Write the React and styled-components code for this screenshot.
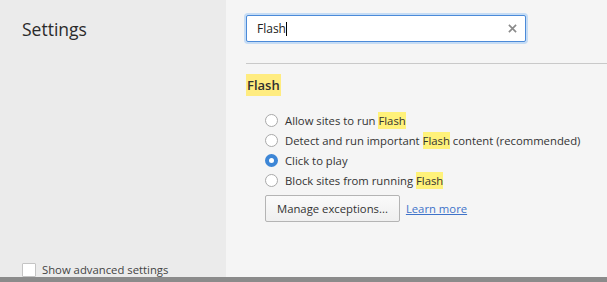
import React from "react";
import styled, { createGlobalStyle } from "styled-components";

const GlobalStyle = createGlobalStyle`
  html, body {
    margin: 0;
    padding: 0;
    background: #f5f5f5;
  }
  body {
    font-family: "Open Sans", "Noto Sans", sans-serif;
    color: #303030;
  }
`;

const Page = styled.div`
  display: flex;
  flex-direction: column;
  height: 282px;
  width: 607px;
  overflow: hidden;
`;

const Main = styled.div`
  flex: 1;
  display: flex;
  min-height: 0;
`;

const Sidebar = styled.aside`
  width: 226px;
  flex-shrink: 0;
  background: #ebebeb;
  display: flex;
  flex-direction: column;
  justify-content: space-between;
  padding: 17px 0 0 22px;
  box-sizing: border-box;
`;

const Title = styled.h1`
  margin: 0;
  font-size: 17.5px;
  font-weight: 400;
  color: #2a2a2a;
`;

const AdvancedRow = styled.label`
  display: flex;
  align-items: center;
  gap: 6px;
  font-size: 11.3px;
  color: #444;
`;

const Checkbox = styled.span`
  width: 12px;
  height: 12px;
  border: 1px solid #c4c4c4;
  border-radius: 1px;
  background: #fff;
`;

const Content = styled.section`
  flex: 1;
  background: #f5f5f5;
  padding: 15px 0 0 20px;
`;

const SearchBox = styled.div`
  width: 280px;
  height: 27px;
  box-sizing: border-box;
  border: 1px solid #4b8ad8;
  border-radius: 2px;
  box-shadow: 0 0 0 2px #c5dcf5;
  background: #fff;
  display: flex;
  align-items: center;
  padding: 0 8px 0 10px;
`;

const SearchText = styled.span`
  flex: 1;
  font-size: 12px;
  color: #222;
  display: flex;
  align-items: center;
`;

const Caret = styled.span`
  width: 1px;
  height: 14px;
  background: #000;
`;

const ClearIcon = styled.svg`
  width: 9px;
  height: 9px;
`;

const Divider = styled.hr`
  margin: 21px 0 0 0;
  border: 0;
  border-top: 1px solid #c9c9c9;
`;

const Heading = styled.h2`
  margin: 12px 0 0 0;
  font-size: 13px;
  font-weight: 600;
  color: #303030;
  line-height: 19px;
`;

const Mark = styled.mark`
  background: ${({ strong }) => (strong ? "#ffec80" : "#fff27a")};
  color: inherit;
  padding: ${({ strong }) => (strong ? "2px 1px" : "1px 0")};
`;

const OptionList = styled.div`
  display: flex;
  flex-direction: column;
  gap: 4px;
  margin: 17px 0 0 19px;
`;

const Option = styled.label`
  display: flex;
  align-items: center;
  gap: 7px;
  height: 16px;
  font-size: 11.3px;
  color: #333;
`;

const Radio = styled.span`
  width: 13px;
  height: 13px;
  box-sizing: border-box;
  border-radius: 50%;
  border: ${({ checked }) => (checked ? "4px solid #3d86d6" : "1px solid #a9a9a9")};
  background: #fff;
`;

const Actions = styled.div`
  display: flex;
  align-items: center;
  gap: 6px;
  margin: 7px 0 0 19px;
`;

const Button = styled.button`
  font-family: inherit;
  font-size: 11.3px;
  color: #333;
  height: 27px;
  padding: 0 11px;
  border: 1px solid #b4b4b4;
  border-radius: 2px;
  background: linear-gradient(#fafafa, #efefef);
`;

const Link = styled.a`
  font-size: 11.3px;
  color: #3f73c9;
  text-decoration: underline;
`;

const BottomBar = styled.div`
  height: 5px;
  background: #8b8b8b;
`;

const options = [
  { before: "Allow sites to run ", hit: "Flash", after: "" },
  { before: "Detect and run important ", hit: "Flash", after: " content (recommended)" },
  { before: "Click to play", hit: "", after: "", checked: true },
  { before: "Block sites from running ", hit: "Flash", after: "" },
];

export default function App() {
  return (
    <Page>
      <GlobalStyle />
      <Main>
        <Sidebar>
          <Title>Settings</Title>
          <AdvancedRow>
            <Checkbox />
            Show advanced settings
          </AdvancedRow>
        </Sidebar>
        <Content>
          <SearchBox>
            <SearchText>
              Flash
              <Caret />
            </SearchText>
            <ClearIcon viewBox="0 0 10 10">
              <path d="M1 1 L9 9 M9 1 L1 9" stroke="#8a8a8a" strokeWidth="1.8" />
            </ClearIcon>
          </SearchBox>
          <Divider />
          <Heading>
            <Mark strong>Flash</Mark>
          </Heading>
          <OptionList>
            {options.map((o) => (
              <Option key={o.before}>
                <Radio checked={o.checked} />
                <span>
                  {o.before}
                  {o.hit && <Mark>{o.hit}</Mark>}
                  {o.after}
                </span>
              </Option>
            ))}
          </OptionList>
          <Actions>
            <Button>Manage exceptions...</Button>
            <Link href="#">Learn more</Link>
          </Actions>
        </Content>
      </Main>
      <BottomBar />
    </Page>
  );
}
